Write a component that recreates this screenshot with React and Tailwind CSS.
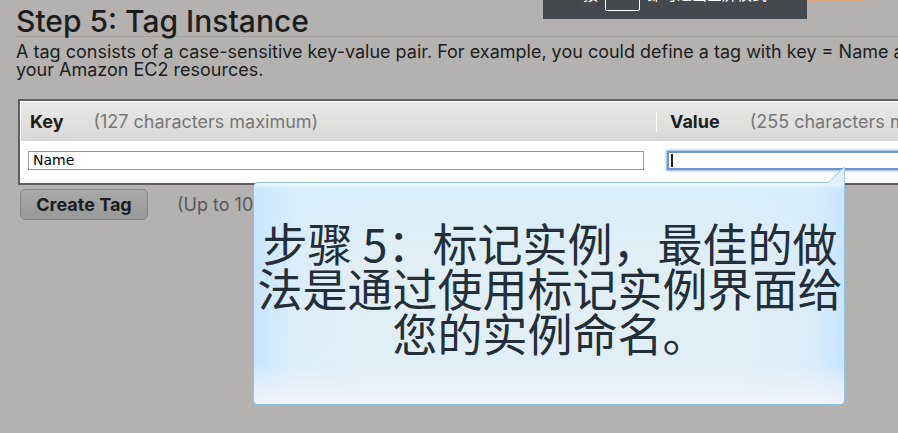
const headCell = "h-[39px] px-[9px] text-left font-normal whitespace-nowrap";

function FullscreenNotice() {
  return (
    <div className="absolute top-0 left-[543px] h-[19px] w-[264px] overflow-hidden bg-[#45494e] text-white">
      <div className="absolute bottom-[8px] left-[40px] flex items-end gap-[7px] font-['Noto_Sans_CJK_SC',sans-serif] text-[15px] leading-[20px] whitespace-nowrap">
        <span className="pb-[7px]">按</span>
        <kbd className="h-[34px] w-[35px] rounded-[2px] border border-white text-center font-['Noto_Sans_CJK_SC',sans-serif] leading-[18px]">Esc</kbd>
        <span className="pb-[7px]">即可退出全屏模式</span>
      </div>
    </div>
  );
}

function Callout() {
  return (
    <div className="absolute top-[182px] left-[253px] w-[592px]">
      <div className="flex h-[223px] justify-center rounded-[5px] rounded-tr-none border border-[#8fc5e2] bg-[linear-gradient(90deg,#c9e6fd_0%,#d8edfb99_7%,#e1eff700_20%,#e1eff700_82%,#d5eafb99_95%,#c9e6fd_100%),linear-gradient(180deg,#d6effb_0px,#e0eef6_35%,#e0eff7_78%)] pt-[37px] pl-[2px]">
        <p className="text-center font-['Noto_Sans_CJK_SC',sans-serif] text-[45px] leading-[45px] whitespace-nowrap text-[#222e39]">
          步骤 5：标记实例，最佳的做
          <br />
          法是通过使用标记实例界面给
          <br />
          您的实例命名。
        </p>
      </div>
      <div className="absolute inset-x-px top-px h-[5px] rounded-tl-[5px] bg-linear-to-b from-[#f0faff] to-[#f0faff33]" />
      <div className="absolute inset-x-px bottom-px h-[40px] rounded-b-[4px] bg-linear-to-b from-[#f2f4fc00] to-[#f2f4fc]" />
      <svg className="absolute -top-[15px] right-0" width="17" height="17" viewBox="0 0 17 17" aria-hidden="true">
        <path d="M0 16 L16.5 0 V17 H0 Z" fill="#e2effb" />
        <path d="M0 15.5 L16.5 0 V17" fill="none" stroke="#9fc9e6" />
      </svg>
    </div>
  );
}

export default function App() {
  return (
    <main className="relative min-h-screen overflow-hidden bg-[#b3b2b1] font-[Inter,'Noto_Sans_CJK_SC',sans-serif] text-[18px] leading-[18px] text-[#1d1d1d]">
      <div className="absolute top-0 left-[807px] h-px w-[56px] bg-[#dda57c]" />
      <header className="pt-[6px] pl-4">
        <h1 className="border-b border-[#a09f9e] text-[30px] leading-[30px] font-medium whitespace-nowrap">Step 5: Tag Instance</h1>
        <p className="pt-[6px] whitespace-nowrap">
          A tag consists of a case-sensitive key-value pair. For example, you could define a tag with key = Name and
          <br />
          your Amazon EC2 resources.
        </p>
      </header>

      <section className="mt-[20px] ml-[18px]">
        <div className="w-[145%] border-2 border-[#5f5e5e] bg-white p-px">
          <table className="w-full table-fixed border-collapse">
            <thead>
              <tr className="bg-linear-to-b from-[#e8e8e7] to-[#d7d8d7]">
                <th scope="col" className={headCell}>
                  <span className="font-bold">Key</span>
                  <span className="ml-[30px] text-[#777]">(127 characters maximum)</span>
                </th>
                <th scope="col" className={headCell}>
                  <span className="-ml-[9px] inline-block border-l border-white py-px pl-[13px] font-bold">Value</span>
                  <span className="ml-[30px] text-[#777]">(255 characters maximum)</span>
                </th>
              </tr>
            </thead>
            <tbody>
              <tr>
                <td className="h-[41px] pr-[12px] pb-[3px] pl-[7px]">
                  <input aria-label="Key" defaultValue="Name" className="block h-[19px] w-full border border-[#969696] bg-white px-1 font-['DejaVu_Sans',sans-serif] text-[14px] text-black" />
                </td>
                <td className="h-[41px] px-[11px] pb-[3px]">
                  <div className="relative">
                    <input aria-label="Value" className="block h-[19px] w-full border-2 border-[#6d96cc] bg-white px-1 text-[14px] shadow-[0_0_2px_1px_#8eb2df] outline-none" />
                    <span className="absolute top-[3px] left-[4px] h-[13px] w-[2px] bg-[#222]" />
                  </div>
                </td>
              </tr>
            </tbody>
          </table>
        </div>
        <div className="mt-[4px] ml-[2px] flex items-center gap-[29px]">
          <button type="button" className="h-[31px] w-[128px] rounded-[5px] border border-[#858585] bg-linear-to-b from-[#aaa9a9] to-[#989898] font-bold whitespace-nowrap">Create Tag</button>
          <span className="text-[#595959]">(Up to 10 tags maximum)</span>
        </div>
      </section>

      <FullscreenNotice />
      <Callout />
    </main>
  );
}
